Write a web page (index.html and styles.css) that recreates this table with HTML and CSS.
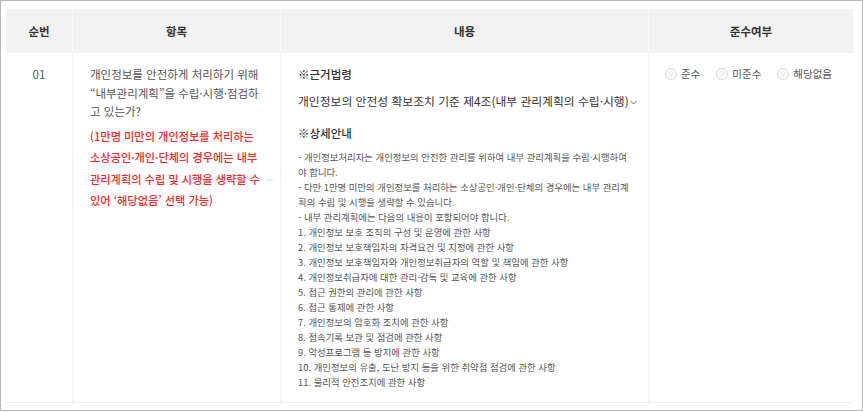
FILE: index.html
```html
<!DOCTYPE html>
<html lang="ko">
<head>
<meta charset="utf-8">
<link rel="stylesheet" href="styles.css">
</head>
<body>
<div class="frame">
  <div class="table">
    <div class="th">순번</div>
    <div class="th">항목</div>
    <div class="th">내용</div>
    <div class="th">준수여부</div>

    <div class="td num">01</div>
    <div class="td item">
      <p class="q">개인정보를 안전하게 처리하기 위해<br>“내부관리계획”을 수립·시행·점검하<br>고 있는가?</p>
      <p class="note">(1만명 미만의 개인정보를 처리하는<br>소상공인·개인·단체의 경우에는 내부<br>관리계획의 수립 및 시행을 생략할 수<br>있어 ‘해당없음’ 선택 가능)</p>
    </div>
    <div class="td content">
      <p class="label">※근거법령</p>
      <p class="law">개인정보의 안전성 확보조치 기준 제4조(내부 관리계획의 수립·시행)<svg class="chev" width="7" height="5" viewBox="0 0 7 5"><polyline points="0.5,0.8 3.5,4 6.5,0.8" fill="none" stroke="#777" stroke-width="1"/></svg></p>
      <p class="label label2">※상세안내</p>
      <div class="detail">
        <p>- 개인정보처리자는 개인정보의 안전한 관리를 위하여 내부 관리계획을 수립·시행하여<br>야 합니다.</p>
        <p>- 다만 1만명 미만의 개인정보를 처리하는 소상공인·개인·단체의 경우에는 내부 관리계<br>획의 수립 및 시행을 생략할 수 있습니다.</p>
        <p>- 내부 관리계획에는 다음의 내용이 포함되어야 합니다.</p>
        <p>1. 개인정보 보호 조직의 구성 및 운영에 관한 사항</p>
        <p>2. 개인정보 보호책임자의 자격요건 및 지정에 관한 사항</p>
        <p>3. 개인정보 보호책임자와 개인정보취급자의 역할 및 책임에 관한 사항</p>
        <p>4. 개인정보취급자에 대한 관리·감독 및 교육에 관한 사항</p>
        <p>5. 접근 권한의 관리에 관한 사항</p>
        <p>6. 접근 통제에 관한 사항</p>
        <p>7. 개인정보의 암호화 조치에 관한 사항</p>
        <p>8. 접속기록 보관 및 점검에 관한 사항</p>
        <p>9. 악성프로그램 등 방지에 관한 사항</p>
        <p>10. 개인정보의 유출, 도난 방지 등을 위한 취약점 점검에 관한 사항</p>
        <p>11. 물리적 안전조치에 관한 사항</p>
      </div>
    </div>
    <div class="td comply">
      <label class="opt"><span class="radio"></span>준수</label>
      <label class="opt"><span class="radio"></span>미준수</label>
      <label class="opt"><span class="radio"></span>해당없음</label>
    </div>
  </div>
</div>
</body>
</html>
```

FILE: styles.css
```css
* { box-sizing: border-box; }
html, body { margin: 0; padding: 0; background: #fff; }
body {
  font-family: "Noto Sans CJK KR", "Noto Sans", sans-serif;
  color: #555;
}
p { margin: 0; }

.frame {
  width: 863px;
  height: 411px;
  border: 1px solid #b8b8b8;
  padding: 8px 8px 0 5px;
}

.table {
  display: grid;
  grid-template-columns: 66px 208px 368px 205px;
  grid-template-rows: 44px 349px;
  border-bottom: 1px solid #eeeeee;
}

.th {
  background: #f2f2f2;
  display: flex;
  align-items: center;
  justify-content: center;
  font-size: 11.5px;
  font-weight: 700;
  color: #333;
}
.th + .th { border-left: 1px solid #fafafa; }

.td {
  padding-top: 12px;
}
.td + .td { border-left: 1px solid #efefef; }

.num {
  text-align: center;
  font-size: 11.5px;
  line-height: 18.5px;
  color: #555;
}

.item {
  padding-left: 17px;
  white-space: nowrap;
}
.item .q {
  font-size: 11.5px;
  line-height: 18.5px;
  color: #555;
}
.item .note {
  margin-top: 5px;
  font-size: 11.2px;
  line-height: 21.5px;
  color: #ee2b2b;
  font-weight: 500;
}

.content {
  padding-left: 17px;
  white-space: nowrap;
}
.label {
  font-size: 11.5px;
  line-height: 18px;
  font-weight: 500;
  color: #333;
}
.label2 { margin-top: 14px; }
.law {
  margin-top: 9px;
  font-size: 11.8px;
  line-height: 18px;
  color: #333;
}
.chev { margin-left: 1px; vertical-align: 1px; }
.detail {
  margin-top: 8px;
  font-size: 9.4px;
  line-height: 15px;
  color: #555;
}

.comply {
  display: flex;
  align-items: flex-start;
  gap: 16px;
  padding: 14px 0 0 16px;
}
.opt {
  display: flex;
  align-items: center;
  gap: 4px;
  font-size: 10.5px;
  line-height: 13px;
  color: #555;
}
.radio {
  width: 12px;
  height: 12px;
  border-radius: 50%;
  border: 1px solid #dcdcdc;
  background: #f4f4f4;
  box-shadow: inset 0 0 0 2px #fbfbfb;
}
```
